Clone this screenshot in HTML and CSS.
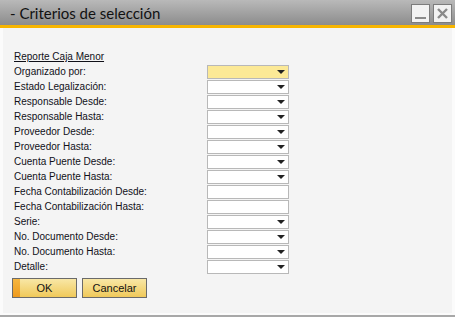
FILE: index.html
```html
<!DOCTYPE html>
<html>

<head>
    <meta charset="UTF-8">
    <title>Criterios de selección</title>
    <link rel="stylesheet" href="styles.css">
</head>

<body>
    <div class="window">
        <div class="titlebar">
            <span class="title">- Criterios de selección</span>
            <div class="winbtns">
                <div class="winbtn"><span class="min-line"></span></div>
                <div class="winbtn">
                    <svg width="13" height="13" viewBox="0 0 13 13">
                        <path d="M2 2 L11 11 M11 2 L2 11" stroke="#8a8a8a" stroke-width="2.4" fill="none" />
                    </svg>
                </div>
            </div>
        </div>
        <div class="panel">
            <div class="form">
                <div class="heading">Reporte Caja Menor</div>

                <label>Organizado por:</label>
                <div class="field combo active"><span class="arrow"></span></div>

                <label>Estado Legalización:</label>
                <div class="field combo"><span class="arrow"></span></div>

                <label>Responsable Desde:</label>
                <div class="field combo"><span class="arrow"></span></div>

                <label>Responsable Hasta:</label>
                <div class="field combo"><span class="arrow"></span></div>

                <label>Proveedor Desde:</label>
                <div class="field combo"><span class="arrow"></span></div>

                <label>Proveedor Hasta:</label>
                <div class="field combo"><span class="arrow"></span></div>

                <label>Cuenta Puente Desde:</label>
                <div class="field combo"><span class="arrow"></span></div>

                <label>Cuenta Puente Hasta:</label>
                <div class="field combo"><span class="arrow"></span></div>

                <label>Fecha Contabilización Desde:</label>
                <div class="field"></div>

                <label>Fecha Contabilización Hasta:</label>
                <div class="field"></div>

                <label>Serie:</label>
                <div class="field combo"><span class="arrow"></span></div>

                <label>No. Documento Desde:</label>
                <div class="field combo"><span class="arrow"></span></div>

                <label>No. Documento Hasta:</label>
                <div class="field combo"><span class="arrow"></span></div>

                <label>Detalle:</label>
                <div class="field combo"><span class="arrow"></span></div>
            </div>
            <div class="buttons">
                <button class="btn btn-ok">OK</button>
                <button class="btn">Cancelar</button>
            </div>
        </div>
    </div>
</body>

</html>
```

FILE: styles.css
```css
/* Page */
body {
    margin: 0;
    background-color: #fff;
    font-family: "Liberation Sans", Arial, sans-serif;
    color: #101018;
}

.window {
    width: 455px;
    height: 317px;
    display: flex;
    flex-direction: column;
}

/* Title bar */
.titlebar {
    height: 25px;
    background: linear-gradient(#b9b9b9, #8c8c8c);
    border-bottom: 3px solid #f7b500;
    display: flex;
    align-items: center;
    justify-content: space-between;
}

.title {
    font-family: Lato, sans-serif;
    font-size: 15px;
    color: #111;
    margin-left: 10px;
    margin-top: 1px;
}

.winbtns {
    display: flex;
    gap: 3px;
    margin-right: 3px;
    margin-top: 2px;
}

.winbtn {
    width: 17px;
    height: 17px;
    background-color: #f2f2f2;
    border: 1px solid #7c7c7c;
    display: flex;
    align-items: center;
    justify-content: center;
}

.min-line {
    width: 11px;
    height: 2px;
    background-color: #8a8a8a;
    margin-top: 9px;
}

/* Main panel */
.panel {
    flex: 1;
    background-color: #f4f4f4;
    border-left: 3px solid #fbfbfb;
    border-right: 3px solid #fbfbfb;
    border-bottom: 2px solid #fbfbfb;
    box-shadow: 0 2px 0 #a8a8a8;
    padding: 22px 0 0 11px;
    margin-bottom: 2px;
}

.form {
    display: grid;
    grid-template-columns: 193px 82px;
    grid-auto-rows: 14px;
    row-gap: 1px;
    font-size: 10px;
}

.heading {
    grid-column: 1 / 3;
    text-decoration: underline;
    line-height: 14px;
}

.form label {
    line-height: 14px;
}

.field {
    background-color: #fff;
    border: 1px solid #b8b8b8;
    box-sizing: border-box;
    position: relative;
}

.field.active {
    background-color: #fce996;
}

.arrow {
    position: absolute;
    right: 3px;
    top: 4px;
    border-left: 4px solid transparent;
    border-right: 4px solid transparent;
    border-top: 4px solid #222;
}

/* Buttons */
.buttons {
    display: flex;
    gap: 5px;
    margin-top: 4px;
    margin-left: -2px;
}

.btn {
    width: 65px;
    height: 20px;
    border: 1px solid #6a6a6a;
    background: linear-gradient(#f8e7a6, #f0c95a);
    font-family: "Liberation Sans", Arial, sans-serif;
    font-size: 11px;
    color: #111;
    padding: 0;
}

.btn-ok {
    background: linear-gradient(#f8e7a6, #f0c95a) no-repeat 7px 0 / 100% 100%,
        linear-gradient(#f6b640, #ee9a1c);
}
```
